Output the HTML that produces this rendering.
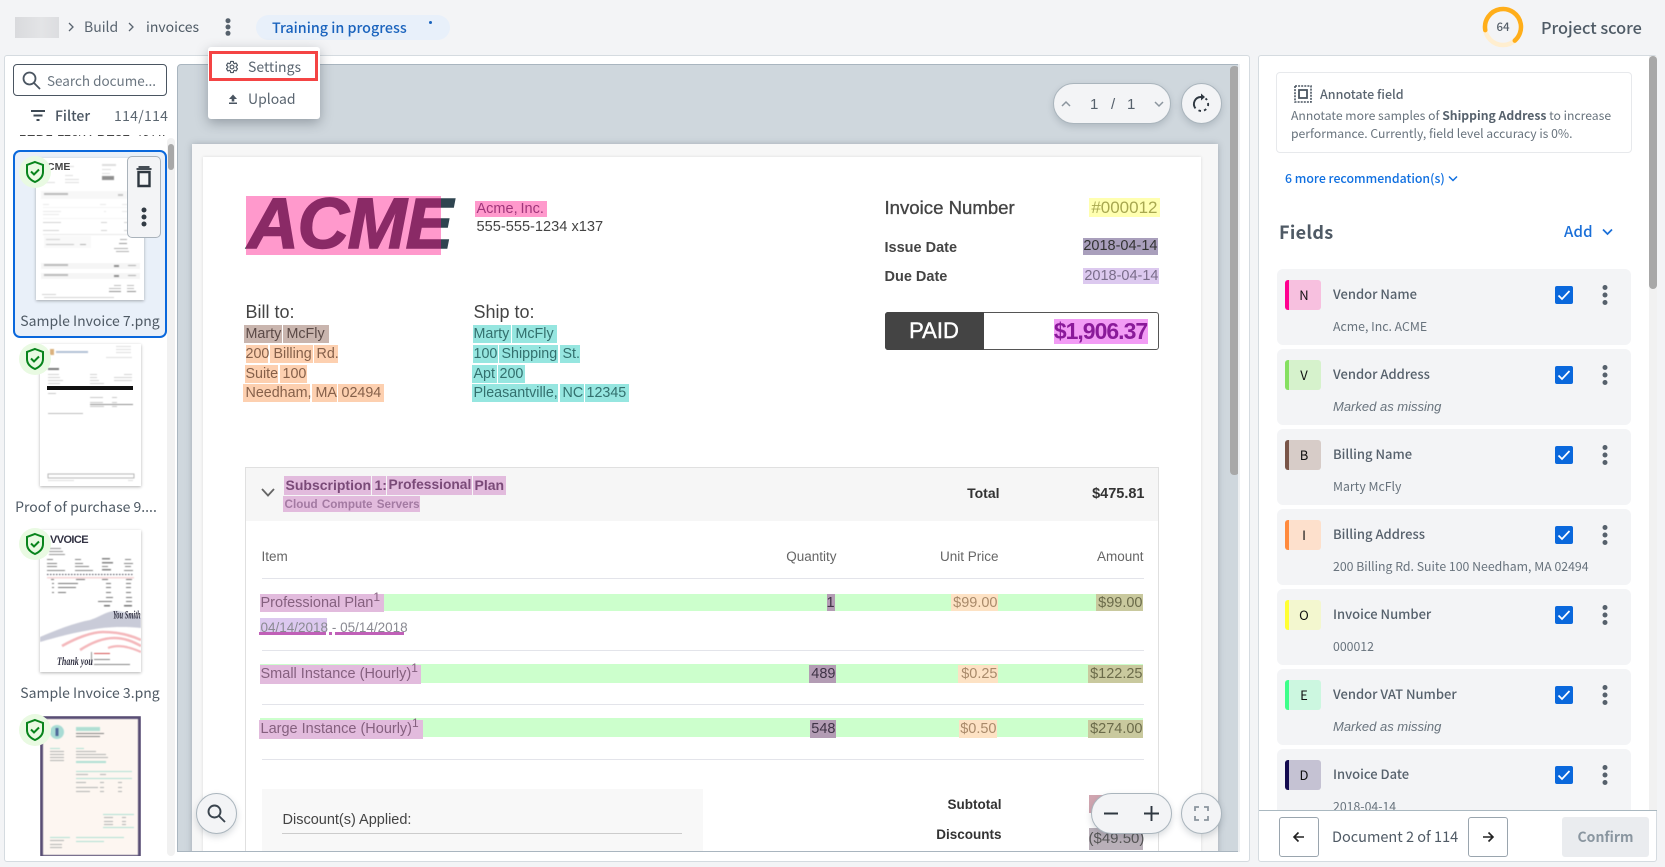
<!DOCTYPE html>
<html><head><meta charset="utf-8"><title>Invoices</title>
<style>
*{box-sizing:border-box}
html,body{margin:0;padding:0;width:1665px;height:867px;overflow:hidden;background:#f3f4f6;font-family:"Liberation Sans","Noto Sans CJK JP",sans-serif}
.a{position:absolute}
.t{position:absolute;white-space:nowrap;line-height:20px;height:20px}
.u{font-family:"Noto Sans CJK JP","Liberation Sans",sans-serif}
.r{text-align:right}
.card{position:absolute;left:1277px;width:354px;height:76px;background:#f3f4f6;border-radius:6px}
.badge{position:absolute;left:8px;top:11px;width:36px;height:30px;border-radius:3px;border-left:4px solid;text-align:center;font:13px/30px "Noto Sans CJK JP",sans-serif;color:#111;padding-right:2px}
.nm{position:absolute;left:56px;top:15px;font:500 13px/20px "Noto Sans CJK JP",sans-serif;color:#56616c;white-space:nowrap}
.vl{position:absolute;left:56px;top:47px;font:12.300px/20px "Noto Sans CJK JP",sans-serif;color:#68737d;white-space:nowrap}
.vl i{font-family:"Liberation Sans",sans-serif;font-size:13px}
.cb{position:absolute;left:278px;top:17px;width:18px;height:18px;background:#0a68dc;border-radius:2px}
.kb{position:absolute;left:324px;top:15px}
.h{position:absolute;height:18px;white-space:nowrap;font-size:14.500px;line-height:18px;padding-left:1px}
.pk{background:#ff99cc;color:#a0357a}
.br{background:#c9b5ae;color:#5b4a47;font-size:14.300px}
.or{background:#fdd0b0;color:#85604a;font-size:14.300px}
.tl{background:#96e6e0;color:#33706e;font-size:14.300px}
.pu{background:#e2bbdd;color:#85607f}
.qt{background:#b39cb4;color:#3f3346}
.un{background:#fde2c4;color:#a98a6a;text-align:right;padding:0}
.am{background:#c9c99e;color:#6b6b4a;text-align:right;padding:0}
.g{background:#ccffcc;position:absolute;left:260px;width:883px}
.ln{position:absolute;left:262px;width:882px;height:1.5px;background:#e3e4ea}
.fb{position:absolute;background:#f3f4f6;border:1px solid #aab5bd;box-shadow:0 3px 7px rgba(60,75,90,.2)}
.th{filter:blur(.45px);opacity:.9}
.th2{filter:blur(.45px);opacity:.65}
</style></head><body>

<!-- top bar -->
<div class="a" style="left:15px;top:17px;width:44px;height:21px;background:linear-gradient(90deg,#d9dadd,#e3e4e6 60%,#dcdde0)"></div>
<svg class="a" style="left:66px;top:21px" width="10" height="12"><path d="M3 2l4 4-4 4" fill="none" stroke="#5a6570" stroke-width="1.3"/></svg>
<div class="t u" style="left:84px;top:17px;font-size:14px;color:#5a6570">Build</div>
<svg class="a" style="left:126px;top:21px" width="10" height="12"><path d="M3 2l4 4-4 4" fill="none" stroke="#5a6570" stroke-width="1.3"/></svg>
<div class="t u" style="left:146px;top:17px;font-size:14px;color:#4f5b66">invoices</div>
<svg class="a" style="left:224px;top:17px" width="8" height="20" fill="#56616c"><circle cx="4" cy="3.700" r="2.500"/><circle cx="4" cy="10" r="2.500"/><circle cx="4" cy="16.300" r="2.500"/></svg>
<div class="a" style="left:256px;top:15px;width:194px;height:25px;border-radius:13px;background:#e8f0fa"></div>
<div class="t u" style="left:272px;top:18px;font-size:14.300px;font-weight:500;color:#1a63bd">Training in progress</div>
<div class="a" style="left:429px;top:21px;width:3px;height:3px;border-radius:2px;background:#1a63bd"></div>

<svg class="a" style="left:1482px;top:6px" width="42" height="42"><circle cx="21" cy="21" r="18" fill="none" stroke="#ffeecf" stroke-width="4.500"/><circle cx="21" cy="21" r="18" fill="none" stroke="#ffae1a" stroke-width="4.500" stroke-dasharray="75 200" stroke-linecap="round" transform="rotate(170 21 21)"/></svg>
<div class="t u" style="left:1483px;top:17px;width:40px;text-align:center;font-size:11.500px;font-weight:500;color:#555f69">64</div>
<div class="t u" style="left:1541px;top:17px;font-size:16.300px;font-weight:500;color:#4f5b66">Project score</div>

<!-- main card -->
<div class="a" style="left:4px;top:55px;width:1246px;height:807px;background:#fff;border:1px solid #d5dbe0;border-radius:3px"></div>
<!-- right card -->
<div class="a" style="left:1258px;top:55px;width:399px;height:807px;background:#fff;border:1px solid #d5dbe0;border-radius:3px"></div>

<!-- left column -->
<div class="a" style="left:13px;top:64px;width:154px;height:32px;border:1.500px solid #4a5561;border-radius:4px"></div>
<svg class="a" style="left:21px;top:70px" width="20" height="20" fill="none" stroke="#4a5561" stroke-width="1.800"><circle cx="8.500" cy="8.500" r="6"/><path d="M13 13l6 6"/></svg>
<div class="t u" style="left:47px;top:70px;font-size:13.500px;color:#6b7680">Search docume...</div>
<svg class="a" style="left:31px;top:110px" width="14" height="12" fill="#3f4a55"><rect x="0" y="0" width="14" height="2"/><rect x="2.500" y="4.500" width="9" height="2"/><rect x="5.500" y="9" width="3" height="2"/></svg>
<div class="t u" style="left:55px;top:106px;font-size:14px;font-weight:500;color:#4a5561">Filter</div>
<div class="t u" style="left:114px;top:106px;font-size:14px;color:#5b6670;letter-spacing:.3px">114/114</div>
<div class="a" style="left:13px;top:135px;width:154px;height:5px;overflow:hidden"><div class="t" style="left:6px;top:-13px;font-size:13px;color:#444;letter-spacing:.4px">1ED1 110/X-BE32-497...</div></div>
<div class="a" style="left:167px;top:138px;width:8px;height:718px;background:#f1f1f1;border-radius:4px"></div>
<div class="a" style="left:168px;top:144px;width:6px;height:26px;background:#a8a8a8;border-radius:3px"></div>

<!-- selected item -->
<div class="a" style="left:13px;top:150px;width:154px;height:188px;background:#e9f0f9;border:2px solid #0a68dc;border-radius:7px"></div>
<svg class="a" style="left:36px;top:158px;box-shadow:0 1px 3px rgba(0,0,0,.3);background:#fff" width="108" height="142" viewBox="0 0 108 142">
<g class="th2">
<g fill="#ccc"><rect x="66" y="6" width="14" height="2"/><rect x="66" y="11" width="9" height="1"/><rect x="66" y="15" width="8" height="1"/><rect x="28" y="8" width="10" height="1"/><rect x="29" y="17" width="8" height="1"/><rect x="29" y="21" width="14" height="1"/><rect x="29" y="24" width="14" height="1"/><rect x="7" y="24" width="12" height="1"/></g>
<rect x="66" y="18" width="12" height="4" fill="#555"/>
<rect x="5" y="33" width="99" height="8" fill="#f3f3f3"/><rect x="8" y="35" width="24" height="2" fill="#999"/><rect x="82" y="36" width="5" height="2" fill="#aaa"/>
<g fill="#ddd"><rect x="7" y="46" width="6" height="1"/><rect x="64" y="46" width="6" height="1"/><rect x="86" y="46" width="10" height="1"/><rect x="7" y="49" width="93" height="1" fill="#eee"/><rect x="7" y="53" width="18" height="1"/><rect x="7" y="56" width="16" height="1"/><rect x="68" y="53" width="2" height="1"/><rect x="86" y="53" width="8" height="1"/><rect x="7" y="60" width="93" height="1" fill="#eee"/></g>
<g fill="#bbb"><rect x="7" y="64" width="18" height="1"/><rect x="65" y="64" width="6" height="1"/><rect x="88" y="64" width="6" height="1"/><rect x="7" y="72" width="16" height="1"/><rect x="65" y="72" width="6" height="1"/><rect x="88" y="72" width="6" height="1"/></g>
<rect x="7" y="76" width="93" height="1" fill="#ddd"/>
<rect x="8" y="78" width="47" height="12" fill="#f6f6f6"/><rect x="10" y="81" width="14" height="1" fill="#bbb"/><rect x="10" y="86" width="28" height="1" fill="#aaa"/><rect x="44" y="86" width="6" height="1" fill="#888"/>
<g fill="#888"><rect x="84" y="81" width="7" height="1"/><rect x="83" y="85" width="8" height="1" fill="#666"/><rect x="78" y="90" width="14" height="1"/><rect x="80" y="93" width="13" height="1"/></g>
<rect x="5" y="105" width="99" height="6" fill="#f0f0f0"/><rect x="8" y="106" width="24" height="2" fill="#999"/><rect x="78" y="107" width="5" height="2" fill="#555"/><rect x="92" y="107" width="8" height="1" fill="#888"/>
<rect x="5" y="115" width="99" height="6" fill="#f0f0f0"/><rect x="8" y="116" width="24" height="2" fill="#999"/><rect x="78" y="117" width="5" height="2" fill="#555"/><rect x="92" y="117" width="8" height="1" fill="#888"/>
<g fill="#999"><rect x="78" y="127" width="7" height="1"/><rect x="91" y="127" width="7" height="1"/><rect x="73" y="130" width="12" height="1"/><rect x="91" y="130" width="7" height="1"/><rect x="73" y="133" width="12" height="1" fill="#555"/><rect x="91" y="133" width="9" height="1" fill="#555"/></g>
<g fill="#bbb"><rect x="6" y="136" width="14" height="1"/><rect x="8" y="139" width="70" height="1"/></g>
</g></svg>
<div class="t" style="left:47px;top:160px;font-size:10.500px;font-weight:bold;color:#444;height:14px;line-height:14px">CME</div>
<div class="a" style="left:127px;top:156px;width:34px;height:82px;background:#f3f4f6;border:1px solid #aab3bb;border-radius:5px"></div>
<svg class="a" style="left:135px;top:166px" width="18" height="22" fill="none" stroke="#2e3740"><path d="M1.500 3h15M3.500 1h11" stroke-width="1.800"/><path d="M3.500 6h11v14h-11z" stroke-width="2.400"/></svg>
<svg class="a" style="left:140px;top:206px" width="8" height="22" fill="#323b44"><circle cx="4" cy="4" r="2.500"/><circle cx="4" cy="11" r="2.500"/><circle cx="4" cy="18" r="2.500"/></svg>
<div class="t u" style="left:13px;top:311px;width:154px;text-align:center;font-size:14px;color:#4f5a65">Sample Invoice 7.png</div>

<!-- item 2 -->
<svg class="a" style="left:40px;top:344px;box-shadow:0 1px 3px rgba(0,0,0,.3);background:#fff" width="101" height="142" viewBox="0 0 101 142">
<g class="th2">
<rect x="10" y="5" width="4" height="6" fill="#c98a3a"/><rect x="16" y="7" width="32" height="2" fill="#8aa0c0"/>
<g fill="#ccc"><rect x="76" y="2" width="15" height="1"/><rect x="76" y="5" width="15" height="1"/><rect x="76" y="8" width="15" height="1"/><rect x="66" y="13" width="26" height="1"/></g>
<rect x="8" y="24" width="11" height="2" fill="#333"/>
<g fill="#bbb"><rect x="8" y="30" width="11" height="1"/><rect x="8" y="33" width="12" height="1"/><rect x="8" y="36" width="15" height="1"/><rect x="8" y="39" width="12" height="1"/><rect x="50" y="30" width="7" height="1"/><rect x="50" y="33" width="7" height="1"/><rect x="50" y="36" width="9" height="1"/><rect x="50" y="39" width="14" height="1"/><rect x="84" y="30" width="8" height="1"/><rect x="74" y="33" width="18" height="1"/><rect x="74" y="36" width="18" height="1"/></g>
<g fill="#aaa"><rect x="8" y="49" width="8" height="1"/><rect x="50" y="53" width="13" height="1"/><rect x="72" y="53" width="5" height="1"/><rect x="50" y="58" width="13" height="1"/><rect x="72" y="58" width="5" height="1"/><rect x="50" y="62" width="14" height="1"/><rect x="72" y="62" width="5" height="1"/></g>
<rect x="50" y="60" width="43" height="1" fill="#555"/>
<rect x="8" y="69" width="35" height="1" fill="#999"/>
<rect x="8" y="130" width="86" height="4" fill="#fff" stroke="#777" stroke-width=".8"/><rect x="8" y="136" width="26" height="1" fill="#ccc"/><rect x="88" y="136" width="5" height="1" fill="#ccc"/>
</g>
<rect x="7" y="42" width="86" height="4" fill="#111"/>
</svg>
<div class="t u" style="left:9px;top:497px;width:154px;text-align:center;font-size:14px;color:#4f5a65">Proof of purchase 9....</div>

<!-- item 3 -->
<svg class="a" style="left:40px;top:530px;box-shadow:0 1px 3px rgba(0,0,0,.3);background:#fff" width="101" height="142" viewBox="0 0 101 142">
<g class="th">
<g fill="#888"><rect x="9" y="18" width="12" height="1"/><rect x="9" y="21" width="14" height="1"/><rect x="9" y="24" width="16" height="1"/></g>
<g fill="#777"><rect x="7" y="29" width="6" height="1"/><rect x="7" y="33" width="10" height="1"/><rect x="7" y="36" width="10" height="1"/><rect x="7" y="40" width="18" height="1"/><rect x="35" y="29" width="6" height="1"/><rect x="35" y="33" width="8" height="1"/><rect x="35" y="36" width="14" height="1"/><rect x="35" y="40" width="18" height="1"/><rect x="62" y="28" width="8" height="1.500"/><rect x="62" y="32" width="11" height="1.500"/><rect x="62" y="36" width="6" height="1"/><rect x="62" y="39" width="9" height="1.500"/><rect x="85" y="29" width="6" height="1"/><rect x="84" y="33" width="9" height="1"/><rect x="85" y="36" width="6" height="1"/><rect x="84" y="40" width="9" height="1"/></g>
<path d="M7 44.500H94" stroke="#334" stroke-dasharray="1.500 1.500" stroke-width="1"/><rect x="7" y="47" width="87" height="1.500" fill="#f6d0d2"/>
<g fill="#666"><rect x="11" y="49" width="3" height="1"/><rect x="36" y="49" width="9" height="1"/><rect x="62" y="49" width="6" height="1"/><rect x="86" y="49" width="6" height="1"/><rect x="12" y="53" width="2" height="1"/><rect x="18" y="53" width="20" height="1"/><rect x="66" y="53" width="5" height="1"/><rect x="86" y="53" width="5" height="1"/><rect x="12" y="57" width="2" height="1"/><rect x="18" y="57" width="18" height="1"/><rect x="66" y="57" width="5" height="1"/><rect x="86" y="57" width="5" height="1"/><rect x="12" y="62" width="2" height="1"/><rect x="18" y="62" width="8" height="1"/><rect x="66" y="62" width="5" height="1"/><rect x="86" y="62" width="5" height="1"/><rect x="66" y="67" width="7" height="1"/><rect x="86" y="67" width="6" height="1"/><rect x="58" y="71" width="14" height="1"/><rect x="86" y="71" width="6" height="1"/><rect x="64" y="75" width="6" height="1.500"/><rect x="84" y="75" width="8" height="1.500"/></g>
<path d="M0 107C16 100 34 93 50 90C60 87 68 80 78 81C86 82 92 85 101 87V98C82 96 64 97 50 100C32 103 14 108 0 112Z" fill="#c4c6d4"/>
<path d="M22 116C36 108 52 102 63 102C76 102 88 104 101 110" fill="none" stroke="#f3b0b4" stroke-width="2.600"/>
<path d="M40 120C54 111 66 108 74 108C84 108 92 111 101 116" fill="none" stroke="#f3b0b4" stroke-width="2.600"/>
<path d="M68 118C78 114 90 117 101 122" fill="none" stroke="#f3b0b4" stroke-width="2.200"/>
<rect x="51" y="122" width="1" height="13" fill="#888"/><rect x="54" y="123" width="16" height="1" fill="#d04040"/><g fill="#777"><rect x="54" y="129" width="16" height="1"/><rect x="54" y="134" width="36" height="1"/></g>
</g></svg>
<div class="t" style="left:50px;top:532px;font-size:11px;font-weight:bold;color:#334;height:16px;line-height:16px;letter-spacing:-.6px">VVOICE</div>
<div class="t" style="left:113px;top:610px;font:italic bold 6.500px/14px 'Liberation Serif',serif;color:#334;height:14px;transform:scaleY(1.700)">You Smith</div>
<div class="t" style="left:57px;top:654px;font:italic bold 8px/16px 'Liberation Serif',serif;color:#334;height:16px;transform:scaleY(1.500)">Thank you</div>
<div class="t u" style="left:13px;top:683px;width:154px;text-align:center;font-size:14px;color:#4f5a65">Sample Invoice 3.png</div>

<!-- item 4 -->
<div class="a" style="left:13px;top:716px;width:154px;height:140px;overflow:hidden">
<svg class="a" style="left:27px;top:0;" width="101" height="142" viewBox="0 0 101 142">
<g class="th">
<rect x="1.500" y="1.500" width="98" height="139" fill="#fdf6f0" stroke="#463a66" stroke-width="3"/>
<circle cx="17" cy="16" r="7" fill="#9fd8d0"/><rect x="15.500" y="12" width="3" height="8" fill="#3d5a90"/>
<rect x="36" y="11" width="24" height="4" fill="#a8dccf"/>
<g fill="#777"><rect x="36" y="17" width="28" height="1"/><rect x="36" y="20" width="24" height="1"/></g>
<g fill="#a8dccf"><rect x="10" y="32" width="10" height="1"/><rect x="36" y="32" width="8" height="1"/><rect x="36" y="45" width="30" height="2"/><rect x="36" y="55" width="56" height="1"/><rect x="36" y="62" width="56" height="1"/><rect x="63" y="98" width="31" height="1"/><rect x="63" y="111" width="31" height="1"/><rect x="10" y="121" width="20" height="1"/><rect x="36" y="121" width="48" height="1"/><rect x="36" y="125" width="28" height="1"/></g>
<g fill="#aaa"><rect x="10" y="35" width="14" height="1"/><rect x="10" y="38" width="14" height="1"/><rect x="10" y="41" width="14" height="1"/><rect x="10" y="44" width="14" height="1"/><rect x="36" y="35" width="20" height="1"/><rect x="36" y="38" width="30" height="1"/><rect x="36" y="41" width="32" height="1"/><rect x="36" y="58" width="12" height="1"/><rect x="60" y="58" width="6" height="1"/><rect x="36" y="66" width="10" height="1"/><rect x="36" y="71" width="22" height="1"/><rect x="36" y="75" width="14" height="1"/><rect x="60" y="66" width="4" height="1"/><rect x="60" y="71" width="4" height="1"/><rect x="60" y="75" width="4" height="1"/><rect x="78" y="66" width="4" height="1"/><rect x="78" y="71" width="4" height="1"/><rect x="78" y="75" width="4" height="1"/><rect x="64" y="101" width="9" height="1"/><rect x="82" y="101" width="4" height="1"/><rect x="64" y="105" width="9" height="1"/><rect x="82" y="105" width="4" height="1"/><rect x="64" y="108" width="9" height="1"/><rect x="82" y="108" width="4" height="1"/><rect x="10" y="124" width="14" height="1"/><rect x="10" y="128" width="12" height="1"/><rect x="10" y="131" width="12" height="1"/></g>
</g></svg></div>

<!-- shields -->
<svg class="a" style="left:19px;top:156px" width="32" height="32" viewBox="0 0 32 32"><circle cx="16" cy="16" r="16" fill="#e9fae2"/><path d="M16 6l8 3v7c0 5-3.500 8-8 10-4.500-2-8-5-8-10V9z" fill="none" stroke="#08841c" stroke-width="2"/><path d="M12 15.500l3 3 5-5" fill="none" stroke="#08841c" stroke-width="2"/></svg>
<svg class="a" style="left:19px;top:343px" width="32" height="32" viewBox="0 0 32 32"><circle cx="16" cy="16" r="16" fill="#e9fae2"/><path d="M16 6l8 3v7c0 5-3.500 8-8 10-4.500-2-8-5-8-10V9z" fill="none" stroke="#08841c" stroke-width="2"/><path d="M12 15.500l3 3 5-5" fill="none" stroke="#08841c" stroke-width="2"/></svg>
<svg class="a" style="left:19px;top:528px" width="32" height="32" viewBox="0 0 32 32"><circle cx="16" cy="16" r="16" fill="#e9fae2"/><path d="M16 6l8 3v7c0 5-3.500 8-8 10-4.500-2-8-5-8-10V9z" fill="none" stroke="#08841c" stroke-width="2"/><path d="M12 15.500l3 3 5-5" fill="none" stroke="#08841c" stroke-width="2"/></svg>
<svg class="a" style="left:19px;top:714px" width="32" height="32" viewBox="0 0 32 32"><circle cx="16" cy="16" r="16" fill="#e9fae2"/><path d="M16 6l8 3v7c0 5-3.500 8-8 10-4.500-2-8-5-8-10V9z" fill="none" stroke="#08841c" stroke-width="2"/><path d="M12 15.500l3 3 5-5" fill="none" stroke="#08841c" stroke-width="2"/></svg>

<!-- viewer -->
<div class="a" style="left:177px;top:64px;width:1063px;height:788px;overflow:hidden;background:#cfd7dd;border:1.500px solid #a9b5bf;border-radius:4px 0 0 0">
<div class="a" style="left:-178.500px;top:-65.500px;width:1665px;height:867px">
 <div class="a" style="left:192px;top:144px;width:1026px;height:740px;background:#f7f7f7;box-shadow:0 0 6px rgba(80,90,100,.35)"></div>
 <div class="a" style="left:203px;top:157px;width:998px;height:720px;background:#fff;box-shadow:0 0 3px rgba(0,0,0,.12)"></div>

 <!-- logo -->
 <div class="t" style="left:248px;top:189px;height:72px;line-height:72px;font-size:71px;font-weight:bold;font-style:italic;color:#2f4550;-webkit-text-stroke:1.500px #2f4550;letter-spacing:-1.200px">ACME</div>
 <div class="a" style="left:246px;top:196px;width:195px;height:59px;background:#ff99cc;overflow:hidden">
  <div class="t" style="left:2px;top:-7px;height:72px;line-height:72px;font-size:71px;font-weight:bold;font-style:italic;color:#8a2a66;-webkit-text-stroke:1.500px #8a2a66;letter-spacing:-1.200px">ACME</div>
 </div>
 <div class="h pk" style="left:475px;top:201px;width:43px;height:16px;line-height:16px;padding-left:2px">Acme,</div>
 <div class="h pk" style="left:518px;top:201px;width:29px;height:16px;line-height:16px;padding-left:3px">Inc.</div>
 <div class="t" style="left:477px;top:217px;font-size:14.600px;color:#444">555-555-1234 x137</div>

 <div class="t" style="left:246px;top:302px;font-size:18px;color:#444">Bill to:</div>
 <div class="t" style="left:474px;top:302px;font-size:18px;color:#444">Ship to:</div>

 <div class="h br" style="left:244px;top:325px;width:38px;padding-left:2px">Marty</div><div class="h br" style="left:283px;top:325px;width:46px;padding-left:4px">McFly</div>
 <div class="h or" style="left:246px;top:345px;width:22px;padding-left:0">200</div><div class="h or" style="left:270px;top:345px;width:43px;padding-left:4px">Billing</div><div class="h or" style="left:314px;top:345px;width:24px;padding-left:3px">Rd.</div>
 <div class="h or" style="left:245px;top:365px;width:33px">Suite</div><div class="h or" style="left:280px;top:365px;width:27px;padding-left:3px">100</div>
 <div class="h or" style="left:243px;top:384px;width:67px;padding-left:3px"><span style="position:relative;z-index:2">Needham,</span></div><div class="h or" style="left:312px;top:384px;width:25px;padding-left:4px">MA</div><div class="h or" style="left:338px;top:384px;width:46px;padding-left:4px">02494</div>

 <div class="h tl" style="left:473px;top:325px;width:38px">Marty</div><div class="h tl" style="left:512px;top:325px;width:45px;padding-left:4px">McFly</div>
 <div class="h tl" style="left:473px;top:345px;width:25px;padding-left:1px">100</div><div class="h tl" style="left:499px;top:345px;width:59px;padding-left:3px">Shipping</div><div class="h tl" style="left:560px;top:345px;width:20px;padding-left:3px">St.</div>
 <div class="h tl" style="left:472px;top:365px;width:25px;padding-left:2px">Apt</div><div class="h tl" style="left:498px;top:365px;width:27px;padding-left:2px">200</div>
 <div class="h tl" style="left:472px;top:384px;width:86px;padding-left:2px;z-index:2;background:none"><span style="position:absolute;left:0;top:0;right:0;bottom:0;background:#96e6e0;z-index:-1"></span>Pleasantville,</div><div class="h tl" style="left:560px;top:384px;width:24px;padding-left:3px">NC</div><div class="h tl" style="left:585px;top:384px;width:44px;padding-left:2px">12345</div>

 <!-- invoice meta -->
 <div class="t" style="left:885px;top:198px;font-size:18.600px;color:#444;-webkit-text-stroke:.35px #444">Invoice Number</div>
 <div class="a r" style="left:1089px;top:198px;width:71px;height:19px;background:#ffffb0;color:#a8a850;font-size:17px;line-height:19px;padding-right:2px;white-space:nowrap">#000012</div>
 <div class="t" style="left:885px;top:238px;font-size:14.500px;font-weight:bold;color:#444">Issue Date</div>
 <div class="a r" style="left:1083px;top:238px;width:75px;height:17px;background:#a99fbc;color:#333;font-size:14.500px;line-height:17px;white-space:nowrap">2018-04-14</div>
 <div class="t" style="left:885px;top:267px;font-size:14.500px;font-weight:bold;color:#444">Due Date</div>
 <div class="a r" style="left:1083px;top:268px;width:76px;height:16px;background:#dcc9ef;color:#7a6d8a;font-size:14.500px;line-height:16px;white-space:nowrap">2018-04-14</div>

 <div class="a" style="left:885px;top:312px;width:274px;height:38px;border:1.500px solid #555;border-radius:3px;background:#fff"></div>
 <div class="a" style="left:885px;top:312px;width:99px;height:38px;background:#444;border-radius:3px 0 0 3px;color:#fff;font-size:22px;line-height:38px;text-align:center;-webkit-text-stroke:.4px #fff">PAID</div>
 <div class="a" style="left:1054px;top:319px;width:94px;height:25px;background:#f29cf5;color:#8a1a9a;font-size:23px;line-height:25px;text-align:center;font-weight:bold;letter-spacing:-1px;white-space:nowrap">$1,906.37</div>

 <!-- table -->
 <div class="a" style="left:245px;top:467px;width:914px;height:420px;border:1.500px solid #e0e0e0"></div>
 <div class="a" style="left:246px;top:468px;width:912px;height:53px;background:#f6f6f6"></div>
 <svg class="a" style="left:260px;top:487px" width="16" height="12"><path d="M2 2l6 6.500 6-6.500" fill="none" stroke="#666" stroke-width="1.800"/></svg>
 <div class="h pu" style="left:284px;top:476px;width:87px;height:19px;font-size:14px;font-weight:bold;color:#7a4a78;padding-left:2px">Subscription</div>
 <div class="h pu" style="left:372px;top:476px;width:14px;height:19px;font-size:14px;font-weight:bold;color:#7a4a78;padding-left:3px">1:</div>
 <div class="h pu" style="left:387px;top:476px;width:85px;height:19px;font-size:13.800px;font-weight:bold;color:#7a4a78;padding-left:2px">Professional</div>
 <div class="h pu" style="left:473px;top:476px;width:33px;height:19px;font-size:14px;font-weight:bold;color:#7a4a78;padding-left:2px">Plan</div>
 <div class="h pu" style="left:283px;top:496px;width:137px;height:16px;font-size:11.700px;line-height:17px;font-weight:bold;color:#a37aa2;padding-left:2px;word-spacing:1px">Cloud Compute Servers</div>
 <div class="t r" style="left:900px;top:483px;width:100px;font-size:14px;font-weight:bold;color:#333">Total</div>
 <div class="t r" style="left:1045px;top:484px;width:100px;font-size:14.500px;font-weight:bold;color:#333">$475.81</div>

 <div class="t" style="left:262px;top:547px;font-size:13.500px;color:#666">Item</div>
 <div class="t r" style="left:737px;top:547px;width:100px;font-size:13.500px;color:#666">Quantity</div>
 <div class="t r" style="left:899px;top:547px;width:100px;font-size:13.500px;color:#666">Unit Price</div>
 <div class="t r" style="left:1044px;top:547px;width:100px;font-size:13.500px;color:#666">Amount</div>
 <div class="ln" style="top:578px"></div><div class="ln" style="top:650px"></div><div class="ln" style="top:704px"></div><div class="ln" style="top:759px"></div>

 <div class="g" style="top:594px;height:17px"></div>
 <div class="h pu" style="left:260px;top:594px;width:124px;padding-left:1px">Professional Plan<sup style="font-size:12px;line-height:0;vertical-align:6px">1</sup></div>
 <div class="h qt" style="left:827px;top:594px;width:8px;height:17px;text-align:right;padding:0">1</div>
 <div class="h un" style="left:951px;top:594px;width:47px;height:17px">$99.00</div>
 <div class="h am" style="left:1096px;top:594px;width:47px;height:17px">$99.00</div>

 <div class="a" style="left:260px;top:618px;width:67px;height:14px;background:#dcc9ef"></div>
 <div class="t" style="left:261px;top:618px;font-size:13.500px;color:#8a8a92">04/14/2018 - 05/14/2018</div>
 <div class="a" style="left:259px;top:632px;width:67px;height:3px;background:#c060b8"></div>
 <div class="a" style="left:329px;top:632px;width:3px;height:3px;background:#c060b8"></div>
 <div class="a" style="left:335px;top:632px;width:69px;height:3px;background:#c060b8"></div>

 <div class="g" style="top:664px;height:19px"></div>
 <div class="h pu" style="left:260px;top:665px;width:161px;height:19px;line-height:18px">Small Instance (Hourly)<sup style="font-size:12px;line-height:0;vertical-align:6px">1</sup></div>
 <div class="h qt" style="left:809px;top:665px;width:27px;text-align:right;padding:0">489</div>
 <div class="h un" style="left:958px;top:665px;width:40px">$0.25</div>
 <div class="h am" style="left:1088px;top:665px;width:55px">$122.25</div>

 <div class="g" style="top:718px;height:19px"></div>
 <div class="h pu" style="left:259px;top:720px;width:164px;height:19px;line-height:18px;padding-left:2px">Large Instance (Hourly)<sup style="font-size:12px;line-height:0;vertical-align:6px">1</sup></div>
 <div class="h qt" style="left:810px;top:720px;width:26px;text-align:right;padding:0">548</div>
 <div class="h un" style="left:959px;top:720px;width:38px">$0.50</div>
 <div class="h am" style="left:1088px;top:720px;width:55px">$274.00</div>

 <div class="a" style="left:262px;top:789px;width:441px;height:70px;background:#f8f8f8"></div>
 <div class="t" style="left:283px;top:810px;font-size:14.500px;color:#444">Discount(s) Applied:</div>
 <div class="a" style="left:282px;top:833px;width:400px;height:1px;background:#ccc"></div>
 <div class="t r" style="left:902px;top:795px;width:100px;font-size:13.500px;font-weight:bold;color:#333">Subtotal</div>
 <div class="t r" style="left:902px;top:825px;width:100px;font-size:13.500px;font-weight:bold;color:#333">Discounts</div>
 <div class="a" style="left:1089px;top:795px;width:54px;height:18px;background:#d0a5b0"></div>
 <div class="a r" style="left:1089px;top:828px;width:54px;height:22px;background:#b9b0b9;color:#555;font-size:15px;line-height:22px">($49.50)</div>
</div></div>

<!-- viewer scrollbar -->
<div class="a" style="left:1230px;top:66px;width:9px;height:409px;background:#a8a8a8;border-radius:4px"></div>
<div class="a" style="left:1238px;top:64px;width:2px;height:788px;background:#eef0f2"></div>

<!-- floating controls -->
<div class="fb" style="left:1053px;top:83px;width:118px;height:41px;border-radius:21px"></div>
<svg class="a" style="left:1060px;top:100px" width="12" height="8"><path d="M2 6l4-4 4 4" fill="none" stroke="#8b959e" stroke-width="1.500"/></svg>
<svg class="a" style="left:1153px;top:100px" width="12" height="8"><path d="M2 2l4 4 4-4" fill="none" stroke="#8b959e" stroke-width="1.500"/></svg>
<div class="t" style="left:1090px;top:95px;font-size:15px;color:#56616c">1</div>
<div class="t" style="left:1111px;top:95px;font-size:15px;color:#56616c">/</div>
<div class="t" style="left:1127px;top:95px;font-size:15px;color:#56616c">1</div>
<div class="fb" style="left:1181px;top:83px;width:41px;height:41px;border-radius:50%"></div>
<svg class="a" style="left:1190px;top:92px" width="22" height="22" viewBox="0 0 22 22" fill="none" stroke="#2e3740" stroke-width="1.900"><path d="M11 5A7 7 0 0 0 5.500 16.400"/><path d="M8.500 18.300a7 7 0 0 0 2.500.7M14 18.500a7 7 0 0 0 2.200-1.400M18 14a7 7 0 0 0 0-3M17 8a7 7 0 0 0-1.500-1.500"/><path d="M11 1.500L15 5 11 8.500z" fill="#2e3740" stroke="none"/></svg>

<div class="fb" style="left:196px;top:793px;width:41px;height:41px;border-radius:50%"></div>
<svg class="a" style="left:206px;top:803px" width="21" height="21" fill="none" stroke="#3a444e" stroke-width="1.900"><circle cx="8.500" cy="8.500" r="6"/><path d="M13 13l6 6"/></svg>
<div class="fb" style="left:1091px;top:793px;width:81px;height:41px;border-radius:21px"></div>
<svg class="a" style="left:1103px;top:803px" width="62" height="21" fill="none" stroke="#2e3740" stroke-width="1.900"><path d="M1 10.500h14M41 10.500h15M48.500 3v15"/></svg>
<div class="fb" style="left:1181px;top:793px;width:41px;height:41px;border-radius:50%"></div>
<svg class="a" style="left:1194px;top:806px" width="15" height="15" fill="none" stroke="#8b959e" stroke-width="1.800"><path d="M1 5V1h4M10 1h4v4M14 10v4h-4M5 14H1v-4"/></svg>

<!-- dropdown menu -->
<div class="a" style="left:208px;top:47px;width:112px;height:72px;background:#fff;border-radius:3px;box-shadow:0 4px 12px rgba(40,50,60,.35)"></div>
<div class="a" style="left:209px;top:51px;width:109px;height:30px;border:3px solid #f44444"></div>
<svg class="a" style="left:225px;top:60px" width="14" height="14" viewBox="0 0 24 24"><path d="M19.140 12.940c.04-.3.060-.61.060-.94 0-.32-.02-.64-.07-.94l2.030-1.580c.18-.14.23-.41.120-.61l-1.920-3.320c-.12-.22-.37-.29-.59-.22l-2.390.96c-.5-.38-1.030-.7-1.620-.94l-.36-2.540c-.04-.24-.24-.41-.48-.41h-3.840c-.24 0-.43.17-.47.41l-.36 2.540c-.59.24-1.130.57-1.620.94l-2.390-.96c-.22-.08-.47 0-.59.22L2.740 8.870c-.12.21-.08.47.12.61l2.030 1.580c-.05.3-.09.63-.09.94s.02.64.07.94l-2.030 1.580c-.18.14-.23.41-.12.61l1.920 3.320c.12.22.37.29.59.22l2.390-.96c.5.38 1.030.7 1.620.94l.36 2.540c.05.24.24.41.48.41h3.840c.24 0 .44-.17.47-.41l.36-2.540c.59-.24 1.130-.56 1.620-.94l2.390.96c.22.08.47 0 .59-.22l1.920-3.320c.12-.22.070-.47-.12-.61l-2.010-1.580z" fill="none" stroke="#4a5561" stroke-width="2"/><circle cx="12" cy="12" r="3.300" fill="none" stroke="#4a5561" stroke-width="2"/></svg>
<div class="t u" style="left:248px;top:57px;font-size:14px;color:#5a6570">Settings</div>
<svg class="a" style="left:228px;top:94px" width="10" height="10" fill="#4a5561"><path d="M5 .5L9 5H6.300v2.500H3.700V5H1zM1 8.500h8V10H1z"/></svg>
<div class="t u" style="left:248px;top:89px;font-size:14px;color:#5a6570">Upload</div>

<!-- right panel -->
<div class="a" style="left:1276px;top:72px;width:356px;height:81px;border:1px solid #e7e9ec;border-radius:4px"></div>
<svg class="a" style="left:1294px;top:85px" width="18" height="18" fill="none" stroke="#4a5561"><rect x="1" y="1" width="16" height="16" stroke-dasharray="2 1.100" stroke-width="1.600"/><rect x="5" y="5" width="8" height="8" stroke-width="1.800"/></svg>
<div class="t u" style="left:1320px;top:84px;font-size:12.500px;font-weight:500;color:#5a6570">Annotate field</div>
<div class="t u" style="left:1291px;top:105px;font-size:12.200px;color:#68737d">Annotate more samples of <b style="font-weight:700;color:#56616c">Shipping Address</b> to increase</div>
<div class="t u" style="left:1291px;top:123px;font-size:12.200px;color:#68737d">performance. Currently, field level accuracy is 0%.</div>
<div class="t u" style="left:1285px;top:168px;font-size:12.300px;font-weight:500;color:#0f6fe0">6 more recommendation(s)</div>
<svg class="a" style="left:1447px;top:175px" width="12" height="8"><path d="M2 1.500l4 4 4-4" fill="none" stroke="#0f6fe0" stroke-width="1.500"/></svg>
<div class="t u" style="left:1279px;top:222px;font-size:18px;font-weight:700;color:#4f5a65;letter-spacing:.3px">Fields</div>
<div class="t u" style="left:1564px;top:222px;font-size:15px;font-weight:500;color:#1a6fd8;letter-spacing:.2px">Add</div>
<svg class="a" style="left:1601px;top:228px" width="13" height="8"><path d="M2 1.500l4.500 4.500L11 1.500" fill="none" stroke="#1a6fd8" stroke-width="1.700"/></svg>

<div class="a" style="left:1259px;top:56px;width:398px;height:754px;overflow:hidden">
<div class="a" style="left:-1259px;top:-56px;width:1665px;height:867px">
<div class="card" style="top:269px"><div class="badge" style="background:#f7c0df;border-color:#ff0090">N</div><div class="nm">Vendor Name</div><div class="vl">Acme, Inc. ACME</div><div class="cb"><svg width="18" height="18"><path d="M3.500 9.500l3.500 3.500 7.500-8" fill="none" stroke="#fff" stroke-width="1.700"/></svg></div><svg class="kb" width="8" height="22" fill="#56616c"><circle cx="4" cy="3.500" r="2.500"/><circle cx="4" cy="11" r="2.500"/><circle cx="4" cy="18.500" r="2.500"/></svg></div>
<div class="card" style="top:349px"><div class="badge" style="background:#d6f2cc;border-color:#85e060">V</div><div class="nm">Vendor Address</div><div class="vl"><i>Marked as missing</i></div><div class="cb"><svg width="18" height="18"><path d="M3.500 9.500l3.500 3.500 7.500-8" fill="none" stroke="#fff" stroke-width="1.700"/></svg></div><svg class="kb" width="8" height="22" fill="#56616c"><circle cx="4" cy="3.500" r="2.500"/><circle cx="4" cy="11" r="2.500"/><circle cx="4" cy="18.500" r="2.500"/></svg></div>
<div class="card" style="top:429px"><div class="badge" style="background:#d7ccc8;border-color:#795548">B</div><div class="nm">Billing Name</div><div class="vl">Marty McFly</div><div class="cb"><svg width="18" height="18"><path d="M3.500 9.500l3.500 3.500 7.500-8" fill="none" stroke="#fff" stroke-width="1.700"/></svg></div><svg class="kb" width="8" height="22" fill="#56616c"><circle cx="4" cy="3.500" r="2.500"/><circle cx="4" cy="11" r="2.500"/><circle cx="4" cy="18.500" r="2.500"/></svg></div>
<div class="card" style="top:509px"><div class="badge" style="background:#fde0cc;border-color:#ff8a3d">I</div><div class="nm">Billing Address</div><div class="vl">200 Billing Rd. Suite 100 Needham, MA 02494</div><div class="cb"><svg width="18" height="18"><path d="M3.500 9.500l3.500 3.500 7.500-8" fill="none" stroke="#fff" stroke-width="1.700"/></svg></div><svg class="kb" width="8" height="22" fill="#56616c"><circle cx="4" cy="3.500" r="2.500"/><circle cx="4" cy="11" r="2.500"/><circle cx="4" cy="18.500" r="2.500"/></svg></div>
<div class="card" style="top:589px"><div class="badge" style="background:#f3f7cf;border-color:#ffff33">O</div><div class="nm">Invoice Number</div><div class="vl">000012</div><div class="cb"><svg width="18" height="18"><path d="M3.500 9.500l3.500 3.500 7.500-8" fill="none" stroke="#fff" stroke-width="1.700"/></svg></div><svg class="kb" width="8" height="22" fill="#56616c"><circle cx="4" cy="3.500" r="2.500"/><circle cx="4" cy="11" r="2.500"/><circle cx="4" cy="18.500" r="2.500"/></svg></div>
<div class="card" style="top:669px"><div class="badge" style="background:#ccf7e0;border-color:#3dff8a">E</div><div class="nm">Vendor VAT Number</div><div class="vl"><i>Marked as missing</i></div><div class="cb"><svg width="18" height="18"><path d="M3.500 9.500l3.500 3.500 7.500-8" fill="none" stroke="#fff" stroke-width="1.700"/></svg></div><svg class="kb" width="8" height="22" fill="#56616c"><circle cx="4" cy="3.500" r="2.500"/><circle cx="4" cy="11" r="2.500"/><circle cx="4" cy="18.500" r="2.500"/></svg></div>
<div class="card" style="top:749px"><div class="badge" style="background:#c5c2d3;border-color:#130a4f">D</div><div class="nm">Invoice Date</div><div class="vl">2018-04-14</div><div class="cb"><svg width="18" height="18"><path d="M3.500 9.500l3.500 3.500 7.500-8" fill="none" stroke="#fff" stroke-width="1.700"/></svg></div><svg class="kb" width="8" height="22" fill="#56616c"><circle cx="4" cy="3.500" r="2.500"/><circle cx="4" cy="11" r="2.500"/><circle cx="4" cy="18.500" r="2.500"/></svg></div>
</div></div>

<div class="a" style="left:1649px;top:56px;width:8px;height:754px;background:#f1f1f1"></div>
<div class="a" style="left:1649px;top:56px;width:8px;height:233px;background:#a8a8a8;border-radius:4px"></div>

<div class="a" style="left:1259px;top:810px;width:398px;height:1px;background:#aab8c0"></div>
<div class="a" style="left:1279px;top:817px;width:40px;height:40px;border:1px solid #9aa5ae;border-radius:3px"></div>
<svg class="a" style="left:1292px;top:830px" width="14" height="14" fill="none" stroke="#222" stroke-width="1.600"><path d="M12 7H2M6.500 2.500L2 7l4.500 4.500"/></svg>
<div class="t u" style="left:1332px;top:827px;font-size:14.500px;color:#4f5a65">Document 2 of 114</div>
<div class="a" style="left:1468px;top:817px;width:40px;height:40px;border:1px solid #9aa5ae;border-radius:3px"></div>
<svg class="a" style="left:1481px;top:830px" width="14" height="14" fill="none" stroke="#222" stroke-width="1.600"><path d="M2 7h10M7.500 2.500L12 7l-4.500 4.500"/></svg>
<div class="a u" style="left:1562px;top:817px;width:87px;height:40px;background:#eaecef;border-radius:3px;color:#8a96a0;font-size:14px;font-weight:700;line-height:40px;text-align:center">Confirm</div>
</body></html>
